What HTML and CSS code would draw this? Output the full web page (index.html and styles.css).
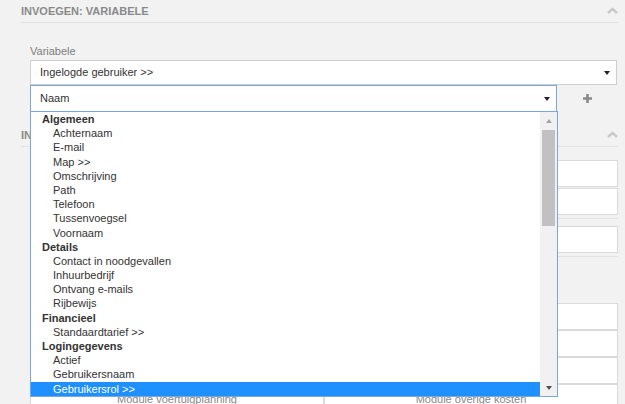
FILE: index.html
```html
<!DOCTYPE html>
<html>
<head>
<meta charset="utf-8">
<link rel="stylesheet" href="styles.css">
</head>
<body>
<div class="page">
  <section class="panel">
    <div class="panel-head">
      <span class="panel-title">Invoegen: Variabele</span>
      <svg class="chev" width="11" height="7" viewBox="0 0 11 7"><path d="M1 6 L5.5 1.8 L10 6" fill="none" stroke="#c9c9c9" stroke-width="2.4"/></svg>
    </div>
    <div class="panel-body first">
      <div class="field-label">Variabele</div>
      <div class="select"><span>Ingelogde gebruiker &gt;&gt;</span><i class="caret"></i></div>
      <div class="row">
        <div class="select focus">
          <span>Naam</span><i class="caret"></i>
          <div class="dropdown">
            <ul class="options">
              <li class="group">Algemeen</li>
              <li>Achternaam</li>
              <li>E-mail</li>
              <li>Map &gt;&gt;</li>
              <li>Omschrijving</li>
              <li>Path</li>
              <li>Telefoon</li>
              <li>Tussenvoegsel</li>
              <li>Voornaam</li>
              <li class="group">Details</li>
              <li>Contact in noodgevallen</li>
              <li>Inhuurbedrijf</li>
              <li>Ontvang e-mails</li>
              <li>Rijbewijs</li>
              <li class="group">Financieel</li>
              <li>Standaardtarief &gt;&gt;</li>
              <li class="group">Logingegevens</li>
              <li>Actief</li>
              <li>Gebruikersnaam</li>
              <li class="selected">Gebruikersrol &gt;&gt;</li>
            </ul>
            <div class="scrollbar">
              <div class="sb-btn"><i class="tri up"></i></div>
              <div class="sb-track"><div class="sb-thumb"></div></div>
              <div class="sb-btn"><i class="tri down"></i></div>
            </div>
          </div>
        </div>
        <div class="add">
          <svg width="9" height="9" viewBox="0 0 9 9"><path d="M4.5 0 V9 M0 4.5 H9" stroke="#8a8a8a" stroke-width="2.6"/></svg>
        </div>
      </div>
    </div>
  </section>
  <section class="panel">
    <div class="panel-head">
      <span class="panel-title">Invoegen: Module</span>
      <svg class="chev" width="11" height="7" viewBox="0 0 11 7"><path d="M1 6 L5.5 1.8 L10 6" fill="none" stroke="#c9c9c9" stroke-width="2.4"/></svg>
    </div>
    <div class="panel-body">
      <div class="input"></div>
      <div class="input"></div>
      <div class="sep"></div>
      <div class="input"></div>
      <div class="sep"></div>
      <div class="tiles">
        <div class="tile"></div><div class="tile"></div>
        <div class="tile"></div><div class="tile"></div>
        <div class="tile"></div><div class="tile"></div>
        <div class="tile">Module voertuigplanning</div><div class="tile">Module overige kosten</div>
      </div>
    </div>
  </section>
</div>
</body>
</html>
```
FILE: styles.css
```css
html, body {
  margin: 0;
  padding: 0;
  background: #f2f2f2;
  font-family: "Liberation Sans", Arial, sans-serif;
  overflow: hidden;
  height: 404px;
}
.page {
  padding: 0 7px 0 21px;
}
.panel-head {
  height: 22px;
  border-bottom: 1px solid #e2e2e2;
  display: flex;
  align-items: center;
  justify-content: space-between;
}
.panel-title {
  font-size: 11px;
  font-weight: bold;
  color: #8a8a8a;
  text-transform: uppercase;
  line-height: 22px;
}
.chev {
  margin-top: -1px;
}
.panel-body {
  padding: 0 0 0 9px;
}
.panel-body.first {
  padding: 20px 1px 12px 9px;
}
.field-label {
  font-size: 11px;
  color: #7d7d7d;
  line-height: 16px;
  margin-bottom: 1px;
}
.select {
  height: 23px;
  border: 1px solid #cfcfcf;
  background: #fff;
  display: flex;
  align-items: center;
  justify-content: space-between;
  padding: 0 6px 0 9px;
  font-size: 11px;
  color: #333;
}
.select > span {
  margin-top: -2px;
}
.caret {
  width: 0;
  height: 0;
  border-left: 3.5px solid transparent;
  border-right: 3.5px solid transparent;
  border-top: 4px solid #222;
}
.row {
  display: flex;
  margin-right: -1px;
}
.select.focus {
  flex: 0 0 510px;
  height: 25px;
  border-color: #7ca5dc;
  position: relative;
  padding: 0 6px 0 9px;
}
.add {
  flex: 1;
  display: flex;
  align-items: center;
  justify-content: center;
}
.dropdown {
  position: absolute;
  left: -1px;
  top: 100%;
  width: 526px;
  height: 284px;
  border: 1px solid #7ca5dc;
  background: #fff;
  display: flex;
  z-index: 5;
}
.options {
  list-style: none;
  margin: 0;
  padding: 0;
  flex: 1;
}
.options li {
  height: 14.2px;
  line-height: 14.2px;
  font-size: 11px;
  color: #333;
  padding-left: 22px;
  white-space: nowrap;
}
.options li.group {
  font-weight: bold;
  padding-left: 11px;
}
.options li.selected {
  background: #1e90ff;
  color: #fff;
}
.scrollbar {
  width: 17px;
  background: #f1f1f1;
  display: flex;
  flex-direction: column;
}
.sb-btn {
  height: 17px;
  display: flex;
  align-items: center;
  justify-content: center;
}
.sb-track {
  flex: 1;
  padding: 1px 2px 0 2px;
}
.sb-thumb {
  width: 13px;
  height: 96px;
  background: #c1c1c1;
}
.tri {
  width: 0;
  height: 0;
  border-left: 3.5px solid transparent;
  border-right: 3.5px solid transparent;
}
.tri.up {
  border-bottom: 4px solid #a3a3a3;
}
.tri.down {
  border-top: 4px solid #505050;
}
.input {
  height: 25px;
  border: 1px solid #dadada;
  background: #fff;
  margin-top: 1px;
}
.input:first-child {
  margin-top: 13px;
}
.sep {
  height: 1px;
  background: #e2e2e2;
  margin: 3px 0 7px;
}
.sep + .tiles {
  margin-top: 46px;
}
.tiles {
  display: grid;
  grid-template-columns: 1fr 1fr;
}
.tile {
  height: 23px;
  padding-top: 2px;
  border: 1px solid #dadada;
  background: #fff;
  font-size: 11px;
  color: #888;
  text-align: center;
  line-height: 25px;
}
```
